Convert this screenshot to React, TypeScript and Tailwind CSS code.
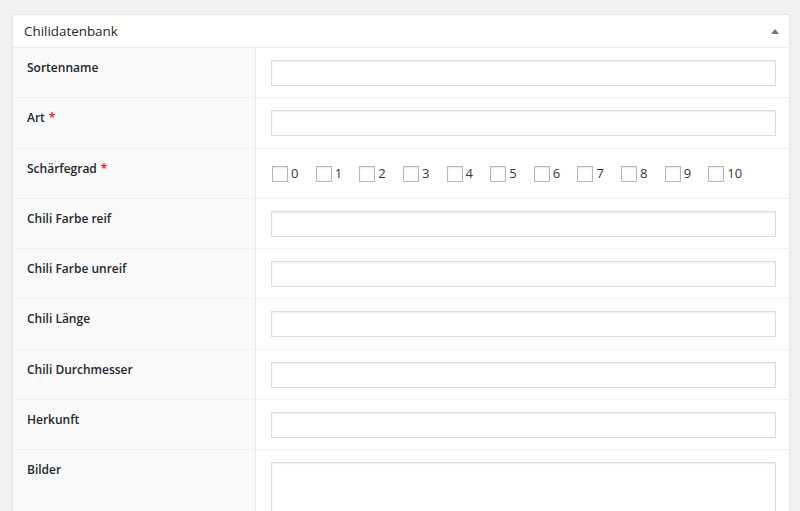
import React from "react";

const fields = [
  { label: "Sortenname" },
  { label: "Art", required: true },
  { label: "Schärfegrad", required: true, checks: true },
  { label: "Chili Farbe reif" },
  { label: "Chili Farbe unreif" },
  { label: "Chili Länge" },
  { label: "Chili Durchmesser" },
  { label: "Herkunft" },
];

const grades = ["0", "1", "2", "3", "4", "5", "6", "7", "8", "9", "10"];

function Row({ label, required, checks }: { label: string; required?: boolean; checks?: boolean }) {
  return (
    <div className="flex border-b border-[#f0f0f0]">
      <div className="w-[243px] shrink-0 border-r border-[#e9e9e9] bg-[#f9f9f9] pl-[14px] pt-[10px] text-[12px] font-semibold leading-[20px] text-[#23282d]">
        {label}
        {required && <span className="ml-1 text-[#ff0000]">*</span>}
      </div>
      <div className="flex-1 pl-[15px] pr-[13px] pt-[12px] pb-[11.3px]">
        {checks ? (
          <div className="flex h-[26px] items-center pl-[1px] pt-[1px]">
            {grades.map((g) => (
              <label key={g} className="mr-[17.2px] flex items-center text-[13px] text-[#32373c]">
                <span className="inline-block h-[16px] w-[16px] border border-[#b4b9be] bg-white shadow-[inset_0_1px_2px_rgba(0,0,0,0.1)]" />
                <span className="ml-[3px]">{g}</span>
              </label>
            ))}
          </div>
        ) : (
          <div className="h-[26px] w-full border border-[#dddddd] bg-white shadow-[inset_0_1px_2px_rgba(0,0,0,0.07)]" />
        )}
      </div>
    </div>
  );
}

export default function App() {
  return (
    <div className="h-[511px] overflow-hidden bg-[#f1f1f1] pl-[12px] pr-[10px] pt-[14px] font-['Open_Sans',sans-serif]">
      <div className="border border-[#e5e5e5] bg-white shadow-[0_1px_1px_rgba(0,0,0,0.04)]">
        <div className="flex h-[33px] items-center justify-between border-b border-[#eeeeee] pl-[11px] pr-[10px]">
          <span className="text-[13.4px] text-[#23282d]">Chilidatenbank</span>
          <svg width="8" height="5" viewBox="0 0 8 5" className="mt-[1px]">
            <path d="M0 5 L4 0 L8 5 Z" fill="#72777c" />
          </svg>
        </div>
        {fields.map((f) => (
          <Row key={f.label} label={f.label} required={f.required} checks={f.checks} />
        ))}
        <div className="flex">
          <div className="w-[243px] shrink-0 border-r border-[#e9e9e9] bg-[#f9f9f9] pl-[14px] pt-[10px] text-[12px] font-semibold leading-[20px] text-[#23282d]">
            Bilder
          </div>
          <div className="flex-1 pl-[15px] pr-[13px] pt-[12px] pb-[11px]">
            <div className="h-[100px] w-full border border-[#dddddd] bg-white shadow-[inset_0_1px_2px_rgba(0,0,0,0.07)]" />
          </div>
        </div>
      </div>
    </div>
  );
}
